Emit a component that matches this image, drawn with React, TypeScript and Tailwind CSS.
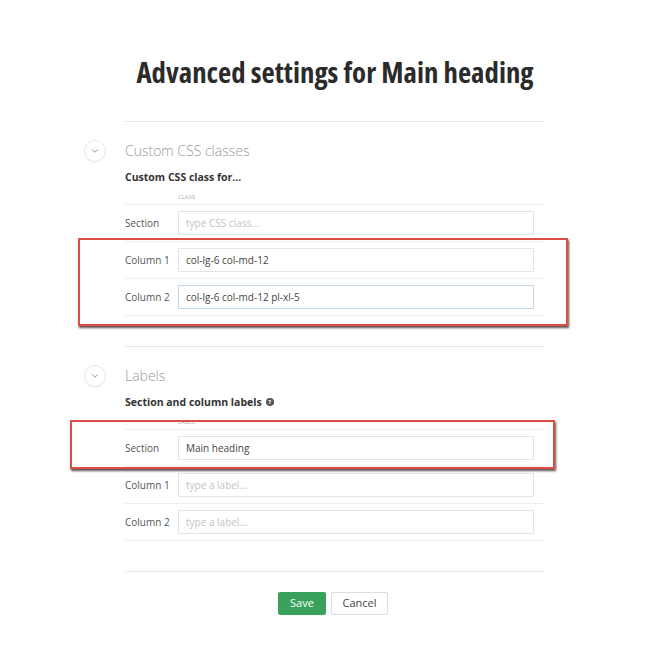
import React from "react";
import { ChevronDown } from "lucide-react";

function Chevron() {
  return (
    <div className="absolute left-[-41px] top-[-1px] flex h-[22px] w-[22px] items-center justify-center rounded-full border border-[#e8e8e8] bg-white shadow-[0_1px_1px_rgba(0,0,0,0.04)]">
      <ChevronDown size={10} strokeWidth={2.2} color="#8a8a8a" />
    </div>
  );
}

function Row({
  label,
  value,
  placeholder,
  focus,
}: {
  label: string;
  value?: string;
  placeholder?: string;
  focus?: boolean;
}) {
  return (
    <div className="flex items-center border-b border-[#ededed] pt-[6px] pb-[6px]">
      <div className="w-[53px] text-[10px] text-[#555]">{label}</div>
      <div
        className={
          focus
            ? "flex h-[24px] w-[356px] items-center border border-[#c3d6ea] bg-white px-[7px] text-[10px] text-[#444]"
            : "flex h-[24px] w-[356px] items-center border border-[#e4e4e4] bg-white px-[7px] text-[10px] text-[#444]"
        }
      >
        {value ? (
          <span>{value}</span>
        ) : (
          <span className="text-[#c4c4c4]">{placeholder}</span>
        )}
      </div>
    </div>
  );
}

export default function App() {
  return (
    <div className="relative h-[653px] w-[670px] overflow-hidden bg-white font-['Open_Sans',sans-serif]">
      <h1 className="pt-[54px] text-center text-[28.8px] leading-[36px] font-bold font-stretch-condensed text-[#2b2b2b]">
        Advanced settings for Main heading
      </h1>

      <div className="ml-[125px] w-[420px]">
        {/* Section 1 */}
        <div className="mt-[31px] border-t border-[#e6e6e6]">
          <div className="relative mt-[19px] h-[20px] text-[14px] leading-[20px] font-light text-[#999]">
            <Chevron />
            Custom CSS classes
          </div>
          <div className="mt-[8px] text-[10.5px] leading-[16px] font-bold text-[#333]">
            Custom CSS class for...
          </div>
          <div className="mt-[8px] pl-[53px] text-[5.5px] leading-[8px] tracking-[0.3px] text-[#aaa]">
            CLASS
          </div>
          <div className="mt-[3px] border-t border-[#ededed]">
            <Row label="Section" placeholder="type CSS class..." />
            <Row label="Column 1" value="col-lg-6 col-md-12" />
            <Row label="Column 2" value="col-lg-6 col-md-12 pl-xl-5" focus />
          </div>
        </div>

        {/* Section 2 */}
        <div className="mt-[30px] border-t border-[#e6e6e6]">
          <div className="relative mt-[19px] h-[20px] text-[14px] leading-[20px] font-light text-[#999]">
            <Chevron />
            Labels
          </div>
          <div className="mt-[8px] flex items-center gap-[4px] text-[10.5px] leading-[16px] font-bold text-[#333]">
            Section and column labels
            <span className="flex h-[8px] w-[8px] items-center justify-center rounded-full bg-[#555] text-[6px] leading-none font-bold text-white">
              ?
            </span>
          </div>
          <div className="mt-[8px] pl-[53px] text-[5.5px] leading-[8px] tracking-[0.3px] text-[#aaa]">
            LABEL
          </div>
          <div className="mt-[3px] border-t border-[#ededed]">
            <Row label="Section" value="Main heading" />
            <Row label="Column 1" placeholder="type a label..." />
            <Row label="Column 2" placeholder="type a label..." />
          </div>
        </div>

        <div className="mt-[30px] border-t border-[#e6e6e6]">
          <div className="mt-[20px] flex gap-[5px] pl-[153px]">
            <button className="h-[23px] w-[48px] rounded-[2px] bg-[#38a25c] text-[11px] text-white">
              Save
            </button>
            <button className="h-[23px] w-[57px] rounded-[2px] border border-[#dedede] bg-white text-[11px] text-[#444]">
              Cancel
            </button>
          </div>
        </div>
      </div>

      {/* highlight boxes */}
      <div className="absolute left-[78px] top-[238px] h-[88px] w-[490px] border-2 border-[#dd4d45] shadow-[1px_2px_2px_rgba(40,20,20,0.75)]" />
      <div className="absolute left-[70px] top-[420px] h-[49px] w-[485px] border-2 border-[#dd4d45] shadow-[1px_2px_2px_rgba(40,20,20,0.75)]" />
    </div>
  );
}
